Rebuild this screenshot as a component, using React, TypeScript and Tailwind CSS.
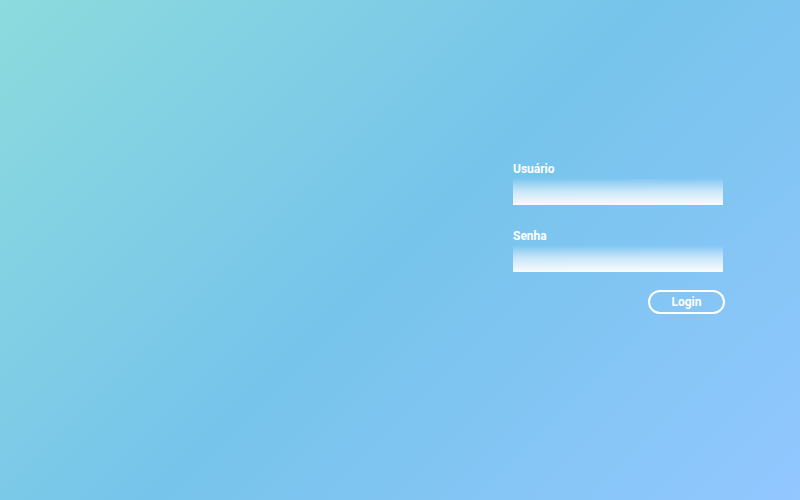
export default function App() {
  return (
    <div
      className="min-h-screen w-full flex justify-end pt-[161px] pr-[75px] bg-[linear-gradient(135deg,#8cdbdd_0%,#76c4eb_50%,#92c7ff_100%)]"
      style={{ fontFamily: "Roboto, 'Noto Sans', sans-serif", height: 500 }}
    >
      <form className="w-[212px] flex flex-col" onSubmit={(e) => e.preventDefault()}>
        <label className="text-white text-[12px] leading-4 font-bold">Usuário</label>
        <input
          type="text"
          className="mt-[1px] w-[210px] h-[27px] outline-none bg-gradient-to-b from-white/0 via-white/60 to-white/95 text-sm px-2"
        />
        <label className="mt-[23px] text-white text-[12px] leading-4 font-bold">Senha</label>
        <input
          type="password"
          className="mt-[1px] w-[210px] h-[27px] outline-none bg-gradient-to-b from-white/0 via-white/60 to-white/95 text-sm px-2"
        />
        <button
          type="submit"
          className="mt-[18px] self-end w-[77px] h-[24px] rounded-full border-2 border-white text-white text-[12px] font-bold leading-none"
        >
          Login
        </button>
      </form>
    </div>
  );
}
